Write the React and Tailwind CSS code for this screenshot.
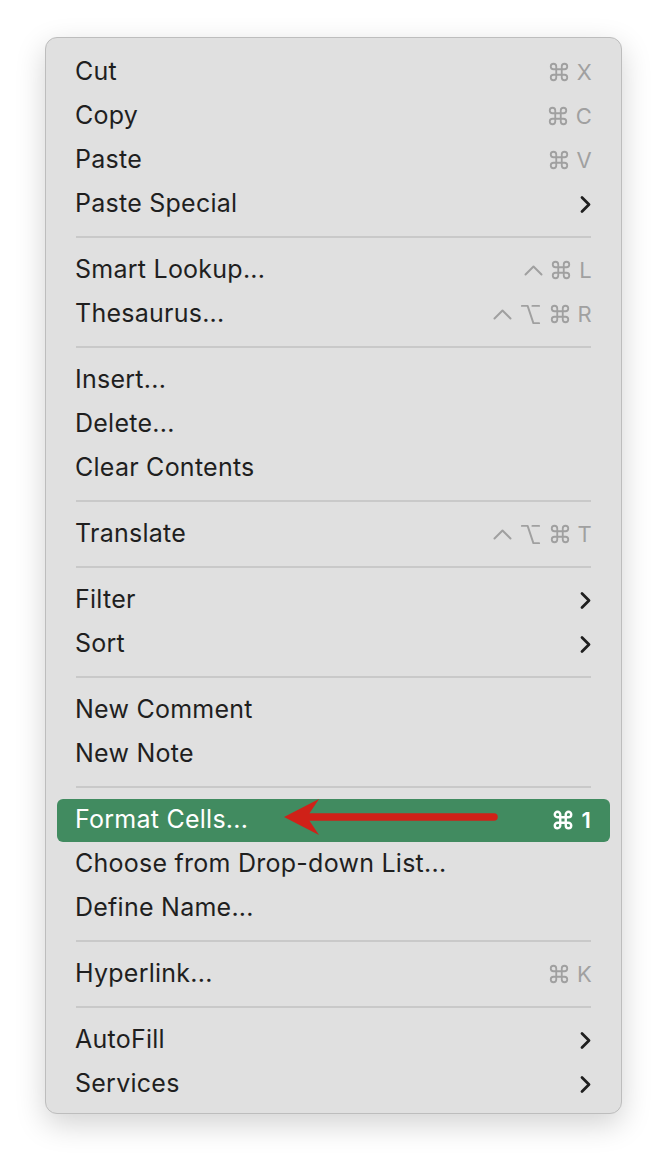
import { Command, Option } from 'lucide-react'

const sections = [
  [
    { label: 'Cut', keys: ['cmd', 'X'] },
    { label: 'Copy', keys: ['cmd', 'C'] },
    { label: 'Paste', keys: ['cmd', 'V'] },
    { label: 'Paste Special', sub: true },
  ],
  [
    { label: 'Smart Lookup...', keys: ['ctrl', 'cmd', 'L'] },
    { label: 'Thesaurus...', keys: ['ctrl', 'opt', 'cmd', 'R'] },
  ],
  [{ label: 'Insert...' }, { label: 'Delete...' }, { label: 'Clear Contents' }],
  [{ label: 'Translate', keys: ['ctrl', 'opt', 'cmd', 'T'] }],
  [
    { label: 'Filter', sub: true },
    { label: 'Sort', sub: true },
  ],
  [{ label: 'New Comment' }, { label: 'New Note' }],
  [
    { label: 'Format Cells...', keys: ['cmd', '1'], active: true },
    { label: 'Choose from Drop-down List...' },
    { label: 'Define Name...' },
  ],
  [{ label: 'Hyperlink...', keys: ['cmd', 'K'] }],
  [
    { label: 'AutoFill', sub: true },
    { label: 'Services', sub: true },
  ],
]

function Key({ k, active }) {
  const sw = active ? 2.6 : 2
  if (k === 'cmd') return <Command className="w-[22px] h-[22px]" strokeWidth={sw} />
  if (k === 'opt') return <Option className="w-[23px] h-[23px]" strokeWidth={sw} />
  if (k === 'ctrl')
    return (
      <svg width="19" height="11" viewBox="0 0 19 11" fill="none" stroke="currentColor" strokeWidth={sw} strokeLinecap="round" strokeLinejoin="round">
        <polyline points="1.5,9.5 9.5,1.5 17.5,9.5" />
      </svg>
    )
  return <span className="leading-none">{k}</span>
}

function Keys({ keys, active }) {
  return (
    <span className={`flex items-center gap-[7px] text-[22px] ${active ? 'text-white font-semibold' : 'text-[#a0a0a0]'}`}>
      {keys.map((k, i) => (
        <Key key={i} k={k} active={active} />
      ))}
    </span>
  )
}

function Chevron() {
  return (
    <svg width="13" height="19" viewBox="0 0 13 19" fill="none" stroke="#1f1f1f" strokeWidth="2.8" strokeLinecap="round" strokeLinejoin="round">
      <polyline points="3,2.5 10,9.5 3,16.5" />
    </svg>
  )
}

function Item({ item }) {
  if (item.active) {
    return (
      <div className="relative mx-[11px] h-[43px] my-[0.5px] rounded-[6px] bg-[#418b60] pl-[18px] pr-[19px] flex items-center justify-between text-white">
        <span>{item.label}</span>
        <Keys keys={item.keys} active />
        <svg className="absolute left-[224px] top-0" width="220" height="43" viewBox="0 0 220 43">
          <path d="M25 18 L213 18" stroke="#cf2118" strokeWidth="7.5" strokeLinecap="round" />
          <path d="M3 18 L38 0 L26 18 L38 36 Z" fill="#cf2118" />
        </svg>
      </div>
    )
  }
  return (
    <div className="h-[44px] pl-[29px] pr-[29px] flex items-center justify-between">
      <span>{item.label}</span>
      {item.keys && <Keys keys={item.keys} />}
      {item.sub && <Chevron />}
    </div>
  )
}

export default function App() {
  return (
    <div className="min-h-[1168px] bg-white pt-[37px] font-['Inter',sans-serif]">
      <div className="ml-[45px] w-[577px] rounded-[12px] border border-[#bdbdbd] bg-[#e0e0e0] pt-[12px] pb-[7px] text-[25px] tracking-[0.25px] text-[#1f1f1f] shadow-[0_10px_30px_rgba(0,0,0,0.18)]">
        {sections.map((sec, si) => (
          <div key={si}>
            {si > 0 && (
              <div className="h-[22px] flex items-center px-[30px]">
                <div className="h-[2px] w-full bg-[#c9c9c9]" />
              </div>
            )}
            {sec.map((item) => (
              <Item key={item.label} item={item} />
            ))}
          </div>
        ))}
      </div>
    </div>
  )
}
